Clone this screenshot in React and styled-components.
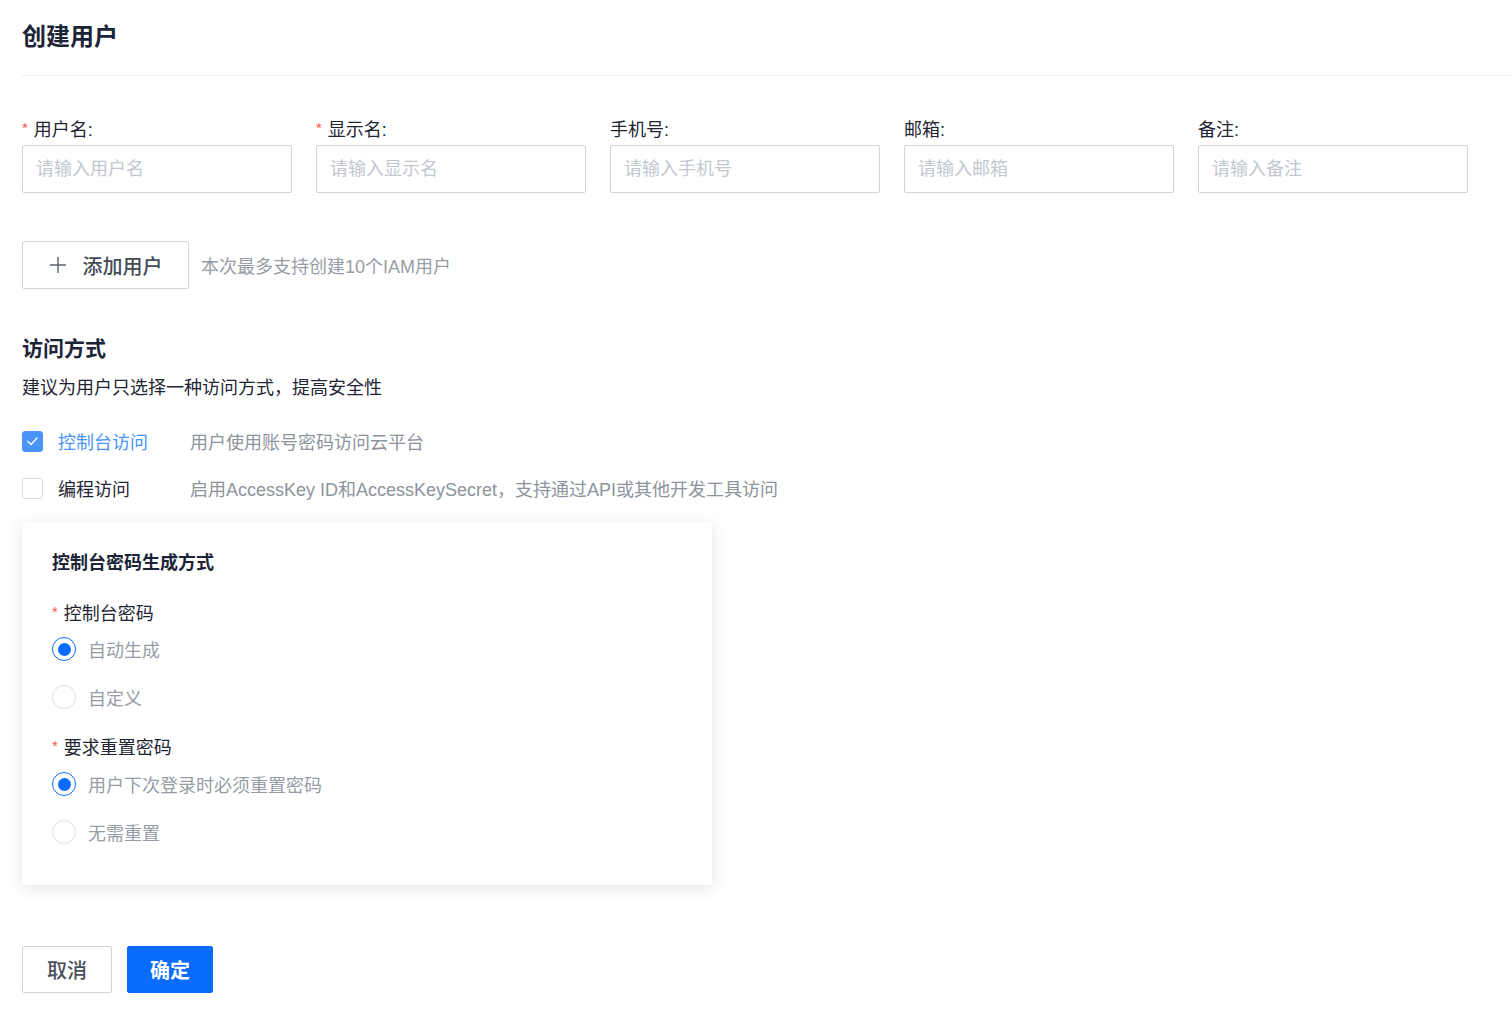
import React, { useState } from "react";
import styled, { createGlobalStyle } from "styled-components";

const GlobalStyle = createGlobalStyle`
  html, body {
    margin: 0;
    padding: 0;
    background: #fff;
  }
  body {
    font-family: "Liberation Sans", "Noto Sans CJK SC", sans-serif;
    color: #1f2533;
  }
  * { box-sizing: border-box; }
`;

const Page = styled.div`
  padding: 21px 0 26px 22px;
  width: 1512px;
`;

const Title = styled.h1`
  margin: 0;
  font-size: 24px;
  line-height: 32px;
  font-weight: 700;
  color: #1c2438;
`;

const Divider = styled.div`
  height: 1px;
  background: #eceef2;
  margin-top: 22px;
`;

const FieldRow = styled.div`
  display: flex;
  gap: 24px;
  margin-top: 42px;
`;

const Field = styled.div`
  width: 270px;
  display: flex;
  flex-direction: column;
  gap: 3px;
`;

const Label = styled.label`
  font-size: 18px;
  line-height: 24px;
  color: #1f2533;
  display: flex;
  align-items: center;
`;

const Star = styled.span`
  color: #f5543f;
  font-size: 15px;
  margin-right: 6px;
  position: relative;
  top: -2px;
`;

const Input = styled.input`
  height: 48px;
  width: 100%;
  border: 1px solid #d1d4db;
  border-radius: 2px;
  padding: 1px 13px 0;
  font-size: 18px;
  font-family: inherit;
  color: #1f2533;
  outline: none;
  &::placeholder {
    color: #c3c7cf;
  }
`;

const AddRow = styled.div`
  display: flex;
  align-items: center;
  gap: 12px;
  margin-top: 48px;
`;

const AddButton = styled.button`
  height: 48px;
  width: 167px;
  background: #fff;
  border: 1px solid #d1d4db;
  border-radius: 2px;
  display: flex;
  align-items: center;
  justify-content: center;
  gap: 16px;
  font-family: inherit;
  font-size: 20px;
  font-weight: 500;
  color: #454b57;
  cursor: pointer;
`;

const Hint = styled.span`
  font-size: 18px;
  color: #979ca6;
`;

const SectionTitle = styled.h2`
  margin: 46px 0 0;
  font-size: 21px;
  line-height: 28px;
  font-weight: 700;
  color: #1c2438;
`;

const SectionDesc = styled.p`
  margin: 12px 0 0;
  font-size: 18px;
  line-height: 26px;
  color: #1f2533;
`;

const AccessList = styled.div`
  margin-top: 28px;
  display: flex;
  flex-direction: column;
  gap: 23px;
`;

const AccessItem = styled.div`
  display: flex;
  align-items: center;
  height: 24px;
`;

const Box = styled.span`
  width: 21px;
  height: 21px;
  border-radius: 3px;
  border: 1px solid ${(p) => (p.$on ? "#4a94f7" : "#d8dbe1")};
  background: ${(p) => (p.$on ? "#4a94f7" : "#fff")};
  display: flex;
  align-items: center;
  justify-content: center;
  margin-right: 15px;
`;

const AccessName = styled.span`
  width: 132px;
  font-size: 18px;
  color: ${(p) => (p.$on ? "#4a94f7" : "#1f2533")};
`;

const AccessDesc = styled.span`
  font-size: 18px;
  color: #8e939d;
`;

const Panel = styled.div`
  width: 690px;
  margin-top: 22px;
  padding: 28px 30px 41px;
  background: #fff;
  box-shadow: 0 3px 14px rgba(30, 40, 60, 0.12);
`;

const PanelTitle = styled.h3`
  margin: 0;
  font-size: 18px;
  line-height: 26px;
  font-weight: 700;
  color: #1c2438;
`;

const Group = styled.div`
  margin-top: ${(p) => p.$top}px;
  display: flex;
  flex-direction: column;
`;

const RadioItem = styled.div`
  display: flex;
  align-items: center;
  height: 24px;
  margin-top: ${(p) => p.$top}px;
  font-size: 18px;
  color: #979ca6;
`;

const Circle = styled.span`
  width: 24px;
  height: 24px;
  border-radius: 50%;
  border: 1.5px solid ${(p) => (p.$on ? "#0a6cff" : "#dadde3")};
  display: flex;
  align-items: center;
  justify-content: center;
  margin-right: 12px;
  &::after {
    content: "";
    width: 13px;
    height: 13px;
    border-radius: 50%;
    background: ${(p) => (p.$on ? "#0a6cff" : "transparent")};
  }
`;

const Footer = styled.div`
  display: flex;
  gap: 15px;
  margin-top: 61px;
`;

const Button = styled.button`
  height: 47px;
  padding: 0 ${(p) => (p.$primary ? 22 : 24)}px;
  border-radius: 2px;
  font-family: inherit;
  font-size: 20px;
  font-weight: ${(p) => (p.$primary ? 700 : 500)};
  color: ${(p) => (p.$primary ? "#fff" : "#4a505b")};
  background: ${(p) => (p.$primary ? "#0a6cff" : "#fff")};
  border: 1px solid ${(p) => (p.$primary ? "#0a6cff" : "#d1d4db")};
  cursor: pointer;
`;

const fields = [
  { label: "用户名", required: true, placeholder: "请输入用户名" },
  { label: "显示名", required: true, placeholder: "请输入显示名" },
  { label: "手机号", required: false, placeholder: "请输入手机号" },
  { label: "邮箱", required: false, placeholder: "请输入邮箱" },
  { label: "备注", required: false, placeholder: "请输入备注" },
];

const Radio = ({ on, top = 0, children, onClick }) => (
  <RadioItem $top={top} onClick={onClick}>
    <Circle $on={on} />
    {children}
  </RadioItem>
);

export default function App() {
  const [pwd, setPwd] = useState("auto");
  const [reset, setReset] = useState("must");

  return (
    <Page>
      <GlobalStyle />
      <Title>创建用户</Title>
      <Divider />

      <FieldRow>
        {fields.map((f) => (
          <Field key={f.label}>
            <Label>
              {f.required && <Star>*</Star>}
              {f.label}:
            </Label>
            <Input placeholder={f.placeholder} />
          </Field>
        ))}
      </FieldRow>

      <AddRow>
        <AddButton>
          <svg width="18" height="18" viewBox="0 0 18 18">
            <path d="M9 1v16M1 9h16" stroke="#5c6270" strokeWidth="1.4" fill="none" />
          </svg>
          添加用户
        </AddButton>
        <Hint>本次最多支持创建10个IAM用户</Hint>
      </AddRow>

      <SectionTitle>访问方式</SectionTitle>
      <SectionDesc>建议为用户只选择一种访问方式，提高安全性</SectionDesc>

      <AccessList>
        <AccessItem>
          <Box $on>
            <svg width="13" height="10" viewBox="0 0 13 10">
              <path d="M1.5 5l3.5 3.5L11.5 1.5" stroke="#fff" strokeWidth="1.4" fill="none" />
            </svg>
          </Box>
          <AccessName $on>控制台访问</AccessName>
          <AccessDesc>用户使用账号密码访问云平台</AccessDesc>
        </AccessItem>
        <AccessItem>
          <Box />
          <AccessName>编程访问</AccessName>
          <AccessDesc>启用AccessKey ID和AccessKeySecret，支持通过API或其他开发工具访问</AccessDesc>
        </AccessItem>
      </AccessList>

      <Panel>
        <PanelTitle>控制台密码生成方式</PanelTitle>
        <Group $top={26}>
          <Label>
            <Star>*</Star>控制台密码
          </Label>
          <Radio top={11} on={pwd === "auto"} onClick={() => setPwd("auto")}>
            自动生成
          </Radio>
          <Radio top={24} on={pwd === "custom"} onClick={() => setPwd("custom")}>
            自定义
          </Radio>
        </Group>
        <Group $top={27}>
          <Label>
            <Star>*</Star>要求重置密码
          </Label>
          <Radio top={12} on={reset === "must"} onClick={() => setReset("must")}>
            用户下次登录时必须重置密码
          </Radio>
          <Radio top={24} on={reset === "none"} onClick={() => setReset("none")}>
            无需重置
          </Radio>
        </Group>
      </Panel>

      <Footer>
        <Button>取消</Button>
        <Button $primary>确定</Button>
      </Footer>
    </Page>
  );
}
